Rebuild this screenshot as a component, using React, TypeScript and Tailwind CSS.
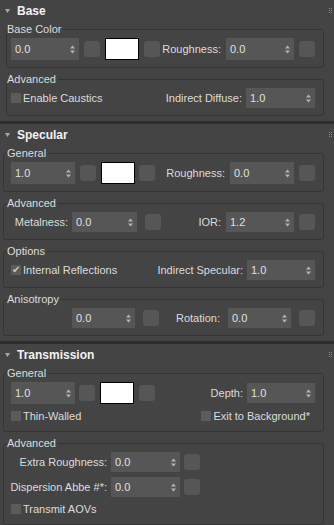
import type { ReactNode } from 'react';

// --- small pieces ---

const Arrows = () => (
  <svg width="5" height="9" viewBox="0 0 5 9" className="shrink-0">
    <polygon points="0,3.5 2.5,0.5 5,3.5" fill="#b4b4b4" />
    <polygon points="0,5.5 2.5,8.5 5,5.5" fill="#b4b4b4" />
  </svg>
);

function Spin({ v, className = '' }: { v: string; className?: string }) {
  return (
    <div className={`flex shrink-0 items-center justify-between bg-[#565656] pl-[4px] pr-[4px] text-[#e0e0e0] ${className}`}>
      <span>{v}</span>
      <Arrows />
    </div>
  );
}

const Btn = ({ className = '' }: { className?: string }) => (
  <div className={`h-[16px] w-[16px] shrink-0 rounded-[3px] bg-[#565656] ${className}`} />
);

const Swatch = ({ className = '' }: { className?: string }) => (
  <div className={`h-[22px] w-[34px] shrink-0 border border-black bg-white ${className}`} />
);

function Check({ label, checked = false }: { label: string; checked?: boolean }) {
  return (
    <div className="flex items-center">
      <div className="flex h-[10px] w-[10px] items-center justify-center bg-[#5b5b5b] text-[10px] leading-none text-[#c8c8c8]">
        {checked ? '✔' : ''}
      </div>
      <span className="ml-[2px]">{label}</span>
    </div>
  );
}

const Dots = () => (
  <svg width="4" height="6" viewBox="0 0 4 6" className="mr-[1px] ml-auto">
    {[0, 2, 4].map((y) => (
      <g key={y}>
        <rect x="0" y={y} width="1" height="1" fill="#8a8a8a" />
        <rect x="2" y={y} width="1" height="1" fill="#8a8a8a" />
      </g>
    ))}
  </svg>
);

function Header({ title }: { title: string }) {
  return (
    <div className="flex h-[22px] items-center pl-[5px]">
      <svg width="5" height="4" viewBox="0 0 5 4">
        <polygon points="0,0 5,0 2.5,4" fill="#a8a8a8" />
      </svg>
      <span className="ml-[7px] text-[12px] font-bold text-[#f2f2f2]">{title}</span>
      <Dots />
    </div>
  );
}

function Group({ label, first = false, wide = false, children }: { label: string; first?: boolean; wide?: boolean; children: ReactNode }) {
  return (
    <fieldset
      className={`mr-[10px] rounded-[3px] border border-[#353535] ${first ? '' : 'mt-[4px]'} ${wide ? 'ml-[6px]' : 'ml-[3px]'}`}
    >
      <legend className={`pr-[2px] text-[11px] leading-[14px] text-[#dcdcdc] ${wide ? 'ml-0' : 'ml-[3px]'}`}>{label}</legend>
      <div className={`pt-[2px] pb-[7px] pr-[8px] ${wide ? 'pl-[4px]' : 'pl-[7px]'}`}>{children}</div>
    </fieldset>
  );
}

const Sep = () => <div className="mt-[5px] h-[3px] bg-[#2d2d2d]" />;

export default function App() {
  return (
    <div
      className="h-[525px] w-[334px] overflow-hidden bg-[#444444] text-[11px] text-[#dcdcdc]"
      style={{ fontFamily: '"Liberation Sans", Arial, sans-serif' }}
    >
      {/* Base */}
      <Header title="Base" />
      <Group label="Base Color" first wide>
        <div className="flex h-[22px] items-center">
          <Spin v="0.0" className="h-[22px] w-[68px]" />
          <Btn className="ml-[5px]" />
          <Swatch className="ml-[5px]" />
          <Btn className="ml-[5px]" />
          <div className="ml-auto flex items-center">
            <span>Roughness:</span>
            <Spin v="0.0" className="ml-[5px] h-[22px] w-[68px]" />
            <Btn className="ml-[5px]" />
          </div>
        </div>
      </Group>
      <Group label="Advanced" wide>
        <div className="flex h-[20px] items-center">
          <Check label="Enable Caustics" />
          <div className="ml-auto flex items-center">
            <span>Indirect Diffuse:</span>
            <Spin v="1.0" className="ml-[4px] h-[20px] w-[69px]" />
          </div>
        </div>
      </Group>
      <Sep />

      {/* Specular */}
      <Header title="Specular" />
      <Group label="General" first>
        <div className="flex h-[22px] items-center">
          <Spin v="1.0" className="h-[22px] w-[64px]" />
          <Btn className="ml-[5px]" />
          <Swatch className="ml-[5px]" />
          <Btn className="ml-[4px]" />
          <div className="ml-auto flex items-center">
            <span>Roughness:</span>
            <Spin v="0.0" className="ml-[5px] h-[22px] w-[64px]" />
            <Btn className="ml-[5px]" />
          </div>
        </div>
      </Group>
      <Group label="Advanced">
        <div className="flex h-[20px] items-center">
          <span className="w-[57px] text-right">Metalness:</span>
          <Spin v="0.0" className="ml-[4px] h-[20px] w-[65px]" />
          <Btn className="ml-[8px]" />
          <div className="ml-auto flex items-center">
            <span>IOR:</span>
            <Spin v="1.2" className="ml-[5px] h-[20px] w-[68px]" />
            <Btn className="ml-[5px]" />
          </div>
        </div>
      </Group>
      <Group label="Options">
        <div className="flex h-[20px] items-center">
          <Check label="Internal Reflections" checked />
          <div className="ml-auto flex items-center">
            <span>Indirect Specular:</span>
            <Spin v="1.0" className="ml-[4px] h-[20px] w-[68px]" />
          </div>
        </div>
      </Group>
      <Group label="Anisotropy">
        <div className="flex h-[20px] items-center">
          <Spin v="0.0" className="ml-[61px] h-[20px] w-[63px]" />
          <Btn className="ml-[8px]" />
          <div className="ml-auto flex items-center">
            <span>Rotation:</span>
            <Spin v="0.0" className="ml-[8px] h-[20px] w-[63px]" />
            <Btn className="ml-[8px]" />
          </div>
        </div>
      </Group>
      <Sep />

      {/* Transmission */}
      <Header title="Transmission" />
      <Group label="General" first>
        <div className="flex h-[22px] items-center">
          <Spin v="1.0" className="h-[22px] w-[64px]" />
          <Btn className="ml-[4px]" />
          <Swatch className="ml-[5px]" />
          <Btn className="ml-[5px]" />
          <div className="ml-auto flex items-center">
            <span>Depth:</span>
            <Spin v="1.0" className="ml-[4px] h-[20px] w-[68px]" />
          </div>
        </div>
        <div className="mt-[4px] flex h-[16px] items-center">
          <Check label="Thin-Walled" />
          <div className="ml-auto mr-[5px]">
            <Check label="Exit to Background*" />
          </div>
        </div>
      </Group>
      <Group label="Advanced">
        <div className="flex h-[20px] items-center">
          <div className="flex w-[96px] justify-end whitespace-nowrap">Extra Roughness:</div>
          <Spin v="0.0" className="ml-[4px] h-[20px] w-[69px]" />
          <Btn className="ml-[4px]" />
        </div>
        <div className="mt-[5px] flex h-[20px] items-center">
          <div className="flex w-[96px] justify-end whitespace-nowrap">Dispersion Abbe #*:</div>
          <Spin v="0.0" className="ml-[4px] h-[20px] w-[69px]" />
          <Btn className="ml-[4px]" />
        </div>
        <div className="mt-[4px] flex h-[16px] items-center">
          <Check label="Transmit AOVs" />
        </div>
      </Group>
    </div>
  );
}
